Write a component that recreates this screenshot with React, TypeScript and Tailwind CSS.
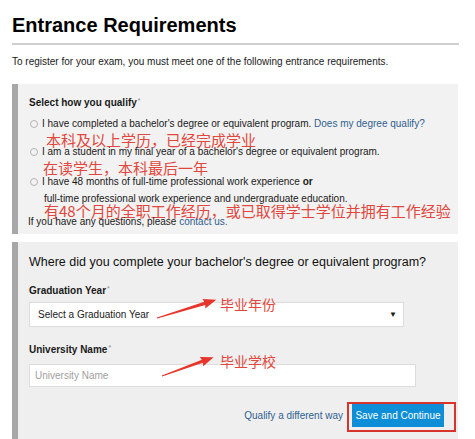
import React from "react";

const cn = "font-['Noto_Sans_CJK_SC',sans-serif] text-[#e1473d]";

function Radio({ children }: { children: React.ReactNode }) {
  return (
    <div className="flex items-center leading-[12px]">
      <span className="ml-[1px] mr-[4px] inline-block h-[8px] w-[8px] shrink-0 rounded-full border border-[#b4b4b4] bg-[#f3f3f3]" />
      <span>{children}</span>
    </div>
  );
}

function Req() {
  return <sup className="ml-[1px] text-[7px] font-normal text-[#888]">*</sup>;
}

function Arrow({ x, y, angle, len }: { x: number; y: number; angle: number; len: number }) {
  const h = len - 12;
  return (
    <polygon
      transform={`translate(${x} ${y}) rotate(${angle})`}
      points={`0,-0.4 ${h},-1.6 ${h - 1},-5 ${len},0 ${h - 1},5 ${h},1.6 0,0.4`}
      fill="#e8352b"
    />
  );
}

export default function App() {
  return (
    <div className="relative h-[439px] w-[475px] overflow-hidden bg-white font-['Liberation_Sans',Arial,sans-serif] text-[10px] text-[#1a1a1a]">
      <div className="px-3 pt-[13px]">
        <h1 className="text-[20px] font-bold leading-[24px] text-black">Entrance Requirements</h1>
        <div className="mt-[6px] h-[2px] w-[447px] bg-[#cfcfcf]" />
        <p className="mt-[11px] leading-[12px]">
          To register for your exam, you must meet one of the following entrance requirements.
        </p>

        {/* how you qualify */}
        <div className="mt-[16px] w-[446px] border-l-[6px] border-[#a7a7a7] bg-[#f2f2f2] pb-[6px] pl-[11px] pt-[13px]">
          <div className="font-bold leading-[12px]">
            Select how you qualify<Req />
          </div>
          <div className="mt-[9px]">
            <Radio>
              I have completed a bachelor's degree or equivalent program.{" "}
              <a className="text-[#2f5f8f]">Does my degree qualify?</a>
            </Radio>
          </div>
          <div className={`${cn} ml-[17px] mt-[2px] text-[15px] leading-[16px]`}>本科及以上学历，已经完成学业</div>
          <div className="mt-[-2px]">
            <Radio>I am a student in my final year of a bachelor's degree or equivalent program.</Radio>
          </div>
          <div className={`${cn} ml-[14px] mt-[2px] text-[15px] leading-[16px]`}>在读学生，本科最后一年</div>
          <div className="mt-[0px]">
            <Radio>
              I have 48 months of full-time professional work experience <b>or</b>
            </Radio>
          </div>
          <div className="ml-[15px] mt-[5px] leading-[12px]">
            full-time professional work experience and undergraduate education.
          </div>
          <div className={`${cn} ml-[15px] mt-[-2px] text-[15px] leading-[16px]`}>
            有48个月的全职工作经历，或已取得学士学位并拥有工作经验
          </div>
          <div className="-ml-[1px] mt-[-3px] leading-[12px]">
            If you have any questions, please <a className="text-[#2f5f8f]">contact us.</a>
          </div>
        </div>

        {/* bachelor's degree */}
        <div className="mt-[8px] h-[220px] w-[446px] border-l-[6px] border-[#a7a7a7] bg-[#efefef] pl-[11px] pt-[12px]">
          <div className="text-[12.5px] leading-[16px] text-[#111]">
            Where did you complete your bachelor's degree or equivalent program?
          </div>
          <div className="mt-[15px] font-bold leading-[12px]">
            Graduation Year<Req />
          </div>
          <div className="mt-[5px] flex h-[25px] w-[375px] items-center justify-between border border-[#dcdcdc] bg-white pl-[8px] pr-[6px]">
            <span>Select a Graduation Year</span>
            <span className="text-[8px]">▼</span>
          </div>
          <div className="mt-[17px] font-bold leading-[12px]">
            University Name<Req />
          </div>
          <div className="mt-[8px] flex h-[23px] w-[387px] items-center border border-[#dcdcdc] bg-white pl-[5px] text-[#a0a0a0]">
            University Name
          </div>
          <div className="mt-[17px] flex w-[415px] items-center justify-end">
            <a className="mr-[9px] text-[#2f5f8f]">Qualify a different way</a>
            <button className="h-[23px] w-[92px] bg-[#0d8ed6] text-[10px] text-white">Save and Continue</button>
          </div>
        </div>
      </div>

      {/* annotations */}
      <div className={`${cn} absolute left-[220px] top-[295px] text-[14px] leading-[18px]`}>毕业年份</div>
      <div className={`${cn} absolute left-[220px] top-[352px] text-[14px] leading-[18px]`}>毕业学校</div>
      <div className="absolute left-[347px] top-[402px] h-[30px] w-[109px] border-2 border-[#d9342b]" />
      <svg className="pointer-events-none absolute left-0 top-0" width="475" height="439">
        <Arrow x={157} y={318} angle={-17} len={62} />
        <Arrow x={162} y={376} angle={-20} len={55} />
      </svg>
    </div>
  );
}
